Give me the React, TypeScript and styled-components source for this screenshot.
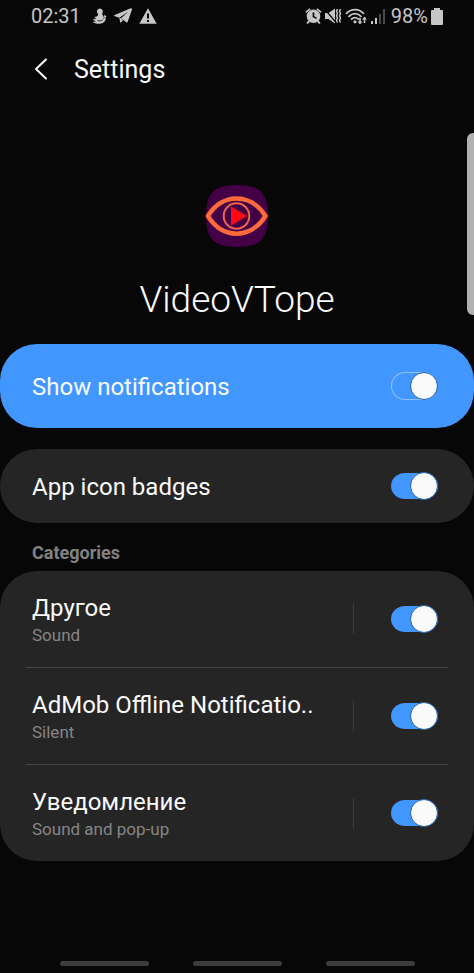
import React, { useId, useState } from 'react';
import styled, { createGlobalStyle, css } from 'styled-components';

const GlobalStyle = createGlobalStyle`
  *, *::before, *::after { box-sizing: border-box; }
  body {
    margin: 0;
    background: #070707;
    color: #fafafa;
    font-family: Roboto, "Noto Sans", sans-serif;
  }
`;

const Screen = styled.div`
  position: relative;
  display: flex;
  flex-direction: column;
  min-height: 100vh;
  background: #070707;
`;

const StatusBar = styled.div`
  display: flex;
  align-items: center;
  justify-content: space-between;
  height: 32px;
  padding: 0 31px;
  font-size: 20px;
  line-height: 32px;
  color: #c6c6c6;
`;

const StatusGroup = styled.div<{ $gap: number }>`
  display: flex;
  align-items: center;
  gap: ${({ $gap }) => $gap}px;
`;

const Clock = styled.time`
  margin-right: 4px;
`;

const BatteryLevel = styled.span`
  margin-left: 2px;
`;

const StatusIcon = styled.svg`
  display: block;
  flex: none;
  fill: currentColor;
`;

const Header = styled.header`
  display: flex;
  align-items: center;
  gap: 16px;
  height: 76px;
  padding: 0 26px;
`;

const BackButton = styled.button`
  display: grid;
  place-items: center;
  width: 32px;
  height: 40px;
  padding: 0 2px 2px 0;
  border: 0;
  background: none;
  color: inherit;
  cursor: pointer;
`;

const HeaderTitle = styled.h1`
  margin: 0;
  font-size: 25px;
  line-height: 32px;
  font-weight: 400;
`;

const AppInfo = styled.section`
  display: flex;
  flex-direction: column;
  align-items: center;
  gap: 28px;
  padding: 76px 24px 20px;
`;

const AppName = styled.h2`
  margin: 0;
  font-size: 37px;
  line-height: 48px;
  font-weight: 300;
`;

const Card = styled.section<{ $accent?: boolean }>`
  overflow: hidden;
  border-radius: 37px;
  background: ${({ $accent }) => ($accent ? '#4297ff' : '#252525')};
`;

const Stack = styled.div`
  display: flex;
  flex-direction: column;
  gap: 21px;
`;

const Row = styled.div<{ $height: number }>`
  display: flex;
  align-items: center;
  height: ${({ $height }) => $height}px;
  padding: 0 36px 0 32px;
`;

const RowText = styled.label`
  flex: 1;
  min-width: 0;
  padding-top: 2px;
  cursor: pointer;
`;

const RowTitle = styled.span`
  display: block;
  overflow: hidden;
  font-size: 24px;
  line-height: 30px;
  white-space: nowrap;
`;

const RowNote = styled.span`
  display: block;
  font-size: 17px;
  line-height: 24px;
  color: #858585;
`;

const Separator = styled.span`
  flex: none;
  width: 1px;
  height: 30px;
  margin: 0 37px 0 8px;
  background: #3c3c3c;
`;

const Divider = styled.hr`
  height: 1px;
  margin: 0 26px;
  border: 0;
  background: #444444;
`;

const SectionTitle = styled.h3`
  margin: 18px 32px 6px;
  font-size: 18px;
  line-height: 24px;
  font-weight: 700;
  color: #828282;
`;

const Toggle = styled.input<{ $outlined?: boolean }>`
  appearance: none;
  flex: none;
  display: flex;
  align-items: center;
  width: 47px;
  height: 28px;
  margin: 0;
  border-radius: 14px;
  background: #5a5a5a content-box;
  padding: 1px 0;
  cursor: pointer;

  &::before {
    content: '';
    width: 28px;
    height: 28px;
    flex: none;
    border: 1px solid #1d62ae;
    border-radius: 50%;
    background: #fafafa;
  }

  &:checked {
    justify-content: flex-end;
    background-color: #4297ff;
  }

  ${({ $outlined }) =>
    $outlined &&
    css`
      border: 1px solid #8cc0ff;
      border-right-color: #4297ff;
      padding: 0;
      &::before { margin-right: -1px; }
    `}
`;

const NavBar = styled.nav`
  display: flex;
  justify-content: center;
  gap: 44px;
  margin-top: auto;
  padding: 20px 20px 0;
`;

const NavButton = styled.button`
  display: grid;
  place-items: center;
  width: 89px;
  height: 19px;
  padding: 0;
  border: 0;
  background: none;
  cursor: pointer;

  &::before {
    content: '';
    width: 100%;
    height: 5px;
    border-radius: 3px;
    background: #3c3c3c;
  }
`;

const EdgeHandle = styled.div`
  position: absolute;
  top: 133px;
  right: 0;
  width: 7px;
  height: 182px;
  border-radius: 6px 0 0 6px;
  background: #b0b0b0;
`;

function AppLogo() {
  return (
    <svg width="64" height="64" viewBox="0 0 64 64" role="img" aria-label="VideoVTope">
      <path
        d="M32 1C55 1 63 9 63 32S55 63 32 63 1 55 1 32 9 1 32 1Z"
        fill="#430047"
      />
      <path
        d="M3 32C17 8.500 46 8.500 60.500 32C46 55.500 17 55.500 3 32Z"
        fill="none"
        stroke="#ff6a3c"
        strokeWidth="4.500"
        strokeLinejoin="round"
      />
      <circle cx="31.500" cy="32" r="12.800" fill="none" stroke="#ef6548" strokeWidth="2" />
      <path d="M26 22.500L42 32L26 41.500Z" fill="#ff0a10" />
    </svg>
  );
}

function LeftStatusIcons() {
  return (
    <>
      <StatusIcon width="15" height="16" viewBox="0 0 15 16">
        <path d="M8 .5a3 3 0 0 1 2.600 4.300c-.4.800-.5 1.200-.1 1.900l.8 1.500c.5 1 .3 1.800-.2 2.400 1.200 0 1.700-.6 1.400-1.500l-1 .3 1-2.600 2 2-.8.300c.5 3.800-2 6.700-6.200 6.700-3 0-5.800-.6-6.800-2.400 1.600.5 2.600.3 3.300-.3-1.700-.1-2.700-.9-3-2 1.300.3 2.300.1 3.100-.6-1-.3-1.500-1-1.500-2 1.200.4 2.200.1 3-.7.700-.8.600-1.500 0-2.400A3 3 0 0 1 8 .5Z" />
        <path d="M5.500 12.500c2 .8 4 .4 5.300-.8" stroke="#070707" strokeWidth="0.800" fill="none" />
      </StatusIcon>
      <StatusIcon width="18" height="16" viewBox="0 0 18 16">
        <path d="M16.700.3.700 7c-.8.400-.7 1 .1 1.300l4.500 1.400L14.500 3.500 7 10.300l5.300 4c.8.400 1.300.2 1.500-.7L18 1.400c.2-1-.4-1.500-1.300-1.100Z" />
        <path d="m5.300 9.700 1 5 .7-.2 2-2L7 10.300Z" />
      </StatusIcon>
      <StatusIcon width="18" height="16" viewBox="0 0 18 16">
        <path fillRule="evenodd" d="M9 .3 17.700 15.700H.3ZM8 5.500v5h2v-5Zm0 6.500v2h2v-2Z" />
      </StatusIcon>
    </>
  );
}

function RightStatusIcons() {
  return (
    <>
      <StatusIcon width="17" height="16" viewBox="0 0 17 16">
        <path d="M4.500.2.400 3.700l1.100 1.400 4.100-3.500ZM12.500.2l4.100 3.500-1.100 1.400-4.100-3.500Z" />
        <path fillRule="evenodd" d="M8.500 1.400a6.800 6.800 0 1 1 0 13.600 6.800 6.800 0 0 1 0-13.600ZM7.600 4.400v4.700l3.500 2 .8-1.400L9.300 8.200V4.400Z" />
        <path d="m3.600 12.300 1.400 1.400L2.800 16l-1.500-1.100ZM13.400 12.300 12 13.700l2.200 2.300 1.500-1.100Z" />
      </StatusIcon>
      <StatusIcon width="17" height="16" viewBox="0 0 17 16">
        <path d="M0 5v6h3.500l6.500 4.500V.5L3.500 5Z" />
        <path d="m0 1.500 11 13" stroke="#070707" strokeWidth="1.200" fill="none" />
        <path d="m12.500 1-1 2.300 1 2.200-1 2.300 1 2.200-1 2.300 1 2.200M15.500 1l-1 2.300 1 2.200-1 2.300 1 2.200-1 2.300 1 2.200" fill="none" stroke="currentColor" strokeWidth="1.500" />
      </StatusIcon>
      <StatusIcon width="23" height="17" viewBox="0 0 23 17">
        <g fill="none" stroke="currentColor" strokeWidth="1.800" strokeLinecap="round">
          <path d="M1.500 5.300c5-4.800 12-4.800 17 0M4 8.300c3.700-3.300 8.300-3.300 12 0M6.600 11.200c2-1.800 4.800-1.800 6.800 0" />
        </g>
        <circle cx="10" cy="13.800" r="1.600" />
        <path d="M14.200 9.800v3.700H12.500L15 16.500l2.500-3h-1.700V9.800ZM18.700 15v-3.500H17L19.500 8.500l2.500 3h-1.700V15Z" />
      </StatusIcon>
      <StatusIcon width="15" height="16" viewBox="0 0 15 16">
        <path d="M0 13h2v3H0ZM4 10h2v6H4Z" />
        <path d="M8 6h2v10H8ZM12 1h2v15h-2Z" opacity="0.350" />
      </StatusIcon>
      <BatteryLevel>98%</BatteryLevel>
      <StatusIcon width="12" height="17" viewBox="0 0 12 17">
        <path d="M3 0h6v2h2q1 0 1 1v13q0 1-1 1H1q-1 0-1-1V3q0-1 1-1h2Z" />
      </StatusIcon>
    </>
  );
}

interface SettingRowProps {
  title: string;
  note?: string;
  height: number;
  outlined?: boolean;
}

function SettingRow({ title, note, height, outlined }: SettingRowProps) {
  const id = useId();
  const [on, setOn] = useState(true);
  return (
    <Row $height={height}>
      <RowText htmlFor={id}>
        <RowTitle>{title}</RowTitle>
        {note && <RowNote>{note}</RowNote>}
      </RowText>
      {note && <Separator />}
      <Toggle
        id={id}
        type="checkbox"
        role="switch"
        $outlined={outlined}
        checked={on}
        onChange={(event) => setOn(event.target.checked)}
      />
    </Row>
  );
}

const categories = [
  { title: 'Другое', note: 'Sound' },
  { title: 'AdMob Offline Notificatio..', note: 'Silent' },
  { title: 'Уведомление', note: 'Sound and pop-up' },
];

export default function App() {
  return (
    <>
      <GlobalStyle />
      <Screen>
        <StatusBar>
          <StatusGroup $gap={7}>
            <Clock>02:31</Clock>
            <LeftStatusIcons />
          </StatusGroup>
          <StatusGroup $gap={3}>
            <RightStatusIcons />
          </StatusGroup>
        </StatusBar>
        <Header>
          <BackButton aria-label="Back">
            <svg width="14" height="22" viewBox="0 0 14 22" fill="none" stroke="currentColor" strokeWidth="2" strokeLinecap="round" strokeLinejoin="round">
              <path d="M12 1.500 2 11l10 9.500" />
            </svg>
          </BackButton>
          <HeaderTitle>Settings</HeaderTitle>
        </Header>
        <main>
          <AppInfo>
            <AppLogo />
            <AppName>VideoVTope</AppName>
          </AppInfo>
          <Stack>
            <Card $accent>
              <SettingRow title="Show notifications" height={84} outlined />
            </Card>
            <Card>
              <SettingRow title="App icon badges" height={74} />
            </Card>
          </Stack>
          <SectionTitle>Categories</SectionTitle>
          <Card>
            {categories.map((category, index) => (
              <React.Fragment key={category.title}>
                {index > 0 && <Divider />}
                <SettingRow {...category} height={96} />
              </React.Fragment>
            ))}
          </Card>
        </main>
        <NavBar>
          <NavButton aria-label="Recent apps" />
          <NavButton aria-label="Home" />
          <NavButton aria-label="Go back" />
        </NavBar>
        <EdgeHandle />
      </Screen>
    </>
  );
}
